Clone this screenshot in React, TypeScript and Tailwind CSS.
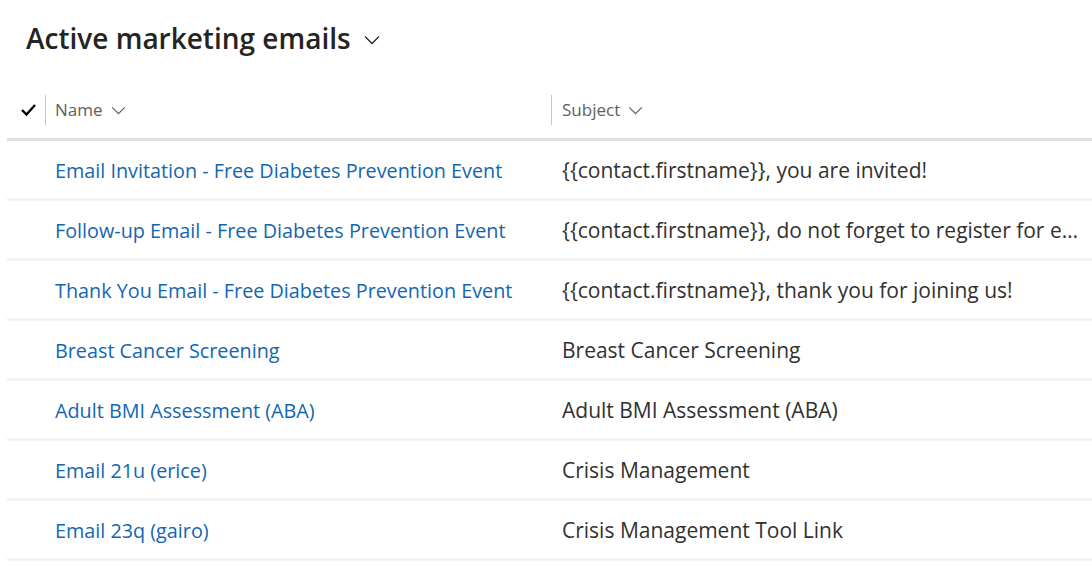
import React from "react";

const rows = [
  ["Email Invitation - Free Diabetes Prevention Event", "{{contact.firstname}}, you are invited!"],
  ["Follow-up Email - Free Diabetes Prevention Event", "{{contact.firstname}}, do not forget to register for event"],
  ["Thank You Email - Free Diabetes Prevention Event", "{{contact.firstname}}, thank you for joining us!"],
  ["Breast Cancer Screening", "Breast Cancer Screening"],
  ["Adult BMI Assessment (ABA)", "Adult BMI Assessment (ABA)"],
  ["Email 21u (erice)", "Crisis Management"],
  ["Email 23q (gairo)", "Crisis Management Tool Link"],
];

function Chevron({ className }: { className?: string }) {
  return (
    <svg viewBox="0 0 16 10" className={className} fill="none" stroke="currentColor" strokeWidth="1.3">
      <path d="M1 1.5 L8 8.5 L15 1.5" />
    </svg>
  );
}

export default function App() {
  return (
    <div className="w-[1092px] h-[568px] overflow-hidden bg-white text-[#323130]" style={{ fontFamily: '"Open Sans", "Noto Sans", sans-serif' }}>
      <div className="flex items-center h-[74px] pl-[26px] pt-[2px]">
        <span className="text-[28px] font-semibold text-[#252423]">Active marketing emails</span>
        <Chevron className="w-[18px] h-[10px] ml-[12px] mt-[4px] text-[#252423]" />
      </div>
      <div className="ml-[7px]">
        <div className="flex items-center h-[67px] pt-[8px] border-b-[3px] border-[#e1dfdd]">
          <div className="w-[38px] flex justify-center">
            <svg viewBox="0 0 16 14" className="w-[17px] h-[14px] ml-[4px]" fill="none" stroke="#000" strokeWidth="2.4">
              <path d="M1.5 7 L6 11.5 L14.5 2" />
            </svg>
          </div>
          <div className="w-[506px] h-[30px] border-l border-[#c8c6c4] flex items-center pl-[9px] text-[17px] text-[#605e5c]">
            <span>Name</span>
            <Chevron className="w-[17px] h-[9px] ml-[7px] text-[#605e5c]" />
          </div>
          <div className="h-[30px] border-l border-[#c8c6c4] flex items-center pl-[10px] text-[17px] text-[#605e5c]">
            <span>Subject</span>
            <Chevron className="w-[17px] h-[9px] ml-[7px] text-[#605e5c]" />
          </div>
        </div>
        {rows.map(([name, subject], i) => (
          <div key={i} className="flex items-center h-[60px] pt-[2px] border-b-[3px] border-[#f3f2f1]">
            <div className="w-[38px] shrink-0" />
            <div className="w-[507px] shrink-0 pl-[10px] text-[19.8px] text-[#1366b0] whitespace-nowrap">{name}</div>
            <div className="flex-1 min-w-0 pl-[10px] pr-[8px] text-[21px] truncate" title={subject}>{subject}</div>
          </div>
        ))}
      </div>
    </div>
  );
}
